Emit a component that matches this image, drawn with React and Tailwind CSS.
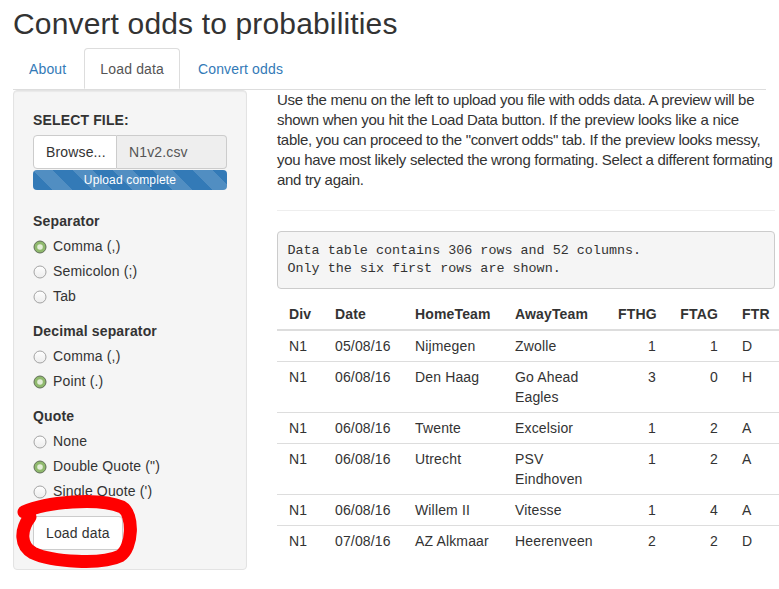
import React from "react";

/* ==================== DATA ==================== */
const rows = [
  ["N1", "05/08/16", "Nijmegen", "Zwolle", 1, 1, "D"],
  ["N1", "06/08/16", "Den Haag", "Go Ahead Eagles", 3, 0, "H"],
  ["N1", "06/08/16", "Twente", "Excelsior", 1, 2, "A"],
  ["N1", "06/08/16", "Utrecht", "PSV Eindhoven", 1, 2, "A"],
  ["N1", "06/08/16", "Willem II", "Vitesse", 1, 4, "A"],
  ["N1", "07/08/16", "AZ Alkmaar", "Heerenveen", 2, 2, "D"],
];

/* ==================== RADIO ==================== */
const Radio = ({ checked, label }) => (
  <div className="flex items-center h-5 gap-[6px]">
    <svg width="14" height="14" viewBox="0 0 14 14" className="mt-px">
      <defs>
        <linearGradient id="rg" x1="0" y1="0" x2="0" y2="1">
          <stop offset="0" stopColor="#ffffff" />
          <stop offset="1" stopColor="#ececec" />
        </linearGradient>
      </defs>
      {checked ? (
        <>
          <circle cx="7" cy="7" r="6" fill="#8fb96d" stroke="#606e57" strokeWidth="1" />
          <circle cx="7" cy="7" r="2.8" fill="#e3edd8" />
        </>
      ) : (
        <circle cx="7" cy="7" r="6" fill="url(#rg)" stroke="#a3a3a3" strokeWidth="1" />
      )}
    </svg>
    <span>{label}</span>
  </div>
);

const RadioGroup = ({ title, options, selected }) => (
  <div className="mb-[15px]">
    <div className="font-bold mb-[5px]">{title}</div>
    <div className="flex flex-col gap-[5px]">
      {options.map((o) => (
        <Radio key={o} label={o} checked={o === selected} />
      ))}
    </div>
  </div>
);

/* ==================== APP ==================== */
export default function App() {
  return (
    <div className="relative w-[779px] h-[589px] overflow-hidden bg-white text-[#333] text-[14px] leading-5 tracking-[0.15px] font-['Liberation_Sans',Arial,sans-serif]">
      <div className="px-[13px]">
        {/* Title */}
        <h2 className="pt-[7px] mb-[8px] text-[30px] leading-[33px] font-normal">
          Convert odds to probabilities
        </h2>

        {/* Tabs */}
        <ul className="flex border-b border-[#ddd]">
          <li className="mr-[2px]">
            <a className="block px-[15px] pt-[10px] pb-[9px] border border-transparent text-[#337ab7]">
              About
            </a>
          </li>
          <li className="mr-[2px] -mb-px">
            <a className="block px-[15px] pt-[10px] pb-[9px] border border-[#ddd] border-b-transparent bg-white rounded-t text-[#555]">
              Load data
            </a>
          </li>
          <li className="mr-[2px]">
            <a className="block px-[15px] pt-[10px] pb-[9px] border border-transparent text-[#337ab7]">
              Convert odds
            </a>
          </li>
        </ul>

        <div className="flex items-start">
          {/* Sidebar */}
          <div className="w-[234px] shrink-0 bg-[#f5f5f5] border border-[#e3e3e3] rounded p-[19px] shadow-[inset_0_1px_1px_rgba(0,0,0,0.05)]">
            <div className="font-bold mb-[5px]">SELECT FILE:</div>
            <div className="flex h-[34px]">
              <div className="w-[84px] shrink-0 flex items-center px-3 bg-white border border-[#ccc] rounded-l">
                Browse...
              </div>
              <div className="flex-1 flex items-center px-3 bg-[#eee] border border-l-0 border-[#ccc] rounded-r text-[#555]">
                N1v2.csv
              </div>
            </div>
            <div className="mt-px mb-[21px] h-5 rounded bg-[#337ab7] bg-[linear-gradient(45deg,rgba(255,255,255,.15)_25%,transparent_25%,transparent_50%,rgba(255,255,255,.15)_50%,rgba(255,255,255,.15)_75%,transparent_75%,transparent)] bg-[length:40px_40px] text-white text-[12px] leading-5 text-center">
              Upload complete
            </div>

            <RadioGroup
              title="Separator"
              options={["Comma (,)", "Semicolon (;)", "Tab"]}
              selected="Comma (,)"
            />
            <RadioGroup
              title="Decimal separator"
              options={["Comma (,)", "Point (.)"]}
              selected="Point (.)"
            />
            <RadioGroup
              title="Quote"
              options={["None", 'Double Quote (")', "Single Quote (')"]}
              selected={'Double Quote (")'}
            />

            <button className="h-[34px] px-3 bg-white border border-[#ccc] rounded text-[#333]">
              Load data
            </button>
          </div>

          {/* Main panel */}
          <div className="ml-[30px] w-[498px] shrink-0">
            <p className="text-[15px] tracking-[-0.3px]">
              Use the menu on the left to upload you file with odds data. A
              preview will be shown when you hit the Load Data button. If the
              preview looks like a nice table, you can proceed to the "convert
              odds" tab. If the preview looks messy, you have most likely
              selected the wrong formating. Select a different formating and
              try again.
            </p>
            <hr className="my-5 border-t border-[#eee]" />
            <pre className="mb-[10px] p-[9.5px] bg-[#f5f5f5] border border-[#ccc] rounded text-[13.4px] leading-[18.57px] tracking-normal font-['Liberation_Mono','Courier_New',monospace]">
              {"Data table contains 306 rows and 52 columns.\nOnly the six first rows are shown."}
            </pre>

            <table className="w-[507px] table-fixed border-collapse">
              <colgroup>
                <col className="w-[46px]" />
                <col className="w-[80px]" />
                <col className="w-[100px]" />
                <col className="w-[103px]" />
                <col className="w-[62px]" />
                <col className="w-[62px]" />
                <col className="w-[54px]" />
              </colgroup>
              <thead>
                <tr className="border-b-2 border-[#ddd]">
                  <th className="px-3 py-[5px] text-left">Div</th>
                  <th className="px-3 py-[5px] text-left">Date</th>
                  <th className="px-3 py-[5px] text-left">HomeTeam</th>
                  <th className="px-3 py-[5px] text-left">AwayTeam</th>
                  <th className="px-3 py-[5px] text-right">FTHG</th>
                  <th className="px-3 py-[5px] text-right">FTAG</th>
                  <th className="px-3 py-[5px] text-left">FTR</th>
                </tr>
              </thead>
              <tbody>
                {rows.map((r, i) => (
                  <tr key={i} className="border-t border-[#ddd] align-top">
                    <td className="px-3 py-[5px]">{r[0]}</td>
                    <td className="px-3 py-[5px]">{r[1]}</td>
                    <td className="px-3 py-[5px]">{r[2]}</td>
                    <td className="px-3 py-[5px]">{r[3]}</td>
                    <td className="px-3 py-[5px] text-right">{r[4]}</td>
                    <td className="px-3 py-[5px] text-right">{r[5]}</td>
                    <td className="px-3 py-[5px]">{r[6]}</td>
                  </tr>
                ))}
              </tbody>
            </table>
          </div>
        </div>
      </div>

      {/* Red marker circle */}
      <svg
        className="absolute left-0 top-[490px] pointer-events-none"
        width="160"
        height="95"
        viewBox="0 490 160 95"
      >
        <defs>
          <filter id="soft">
            <feGaussianBlur stdDeviation="0.7" />
          </filter>
        </defs>
        <path
          d="M 24 512 C 46 502, 98 497, 122 507 C 134 514, 133 548, 120 556 C 102 565, 52 562, 33 553 C 20 546, 20 530, 30 517"
          fill="none"
          stroke="#ff0000"
          strokeWidth="13"
          strokeLinecap="round"
          strokeLinejoin="round"
          filter="url(#soft)"
        />
      </svg>
    </div>
  );
}
